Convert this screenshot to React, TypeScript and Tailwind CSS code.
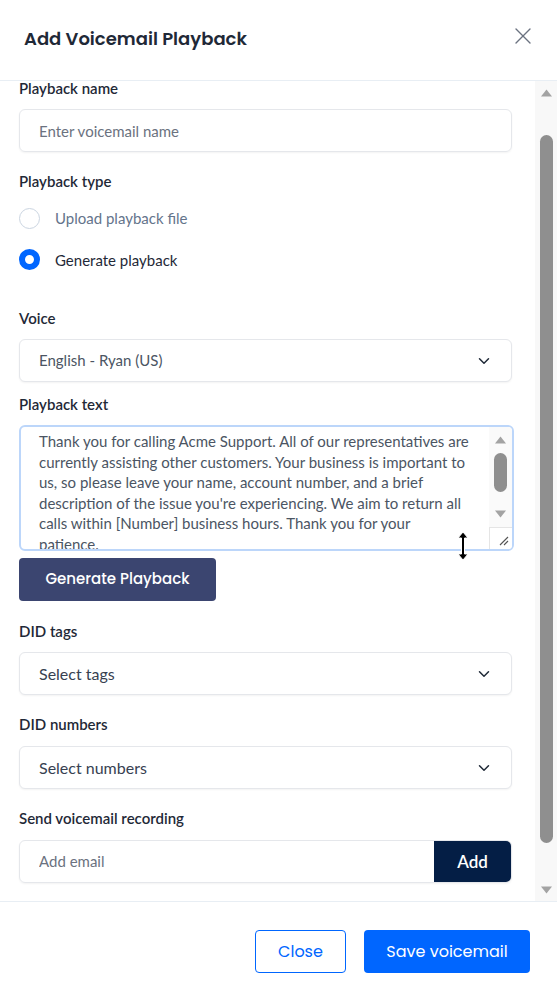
import { useEffect, useRef } from "react";
import { X, ChevronDown } from "lucide-react";

const playbackText =
  "Thank you for calling Acme Support. All of our representatives are currently assisting other customers. Your business is important to us, so please leave your name, account number, and a brief description of the issue you're experiencing. We aim to return all calls within [Number] business hours. Thank you for your patience.";

const body = { fontFamily: '"Source Sans Pro", Lato, "Noto Sans", sans-serif' };
const heading = { fontFamily: 'Poppins, Inter, "Noto Sans", sans-serif' };

function Label({ children }: { children: React.ReactNode }) {
  return (
    <div className="text-[15px] font-semibold leading-5 text-[#1f2937]" style={body}>
      {children}
    </div>
  );
}

function Arrow({ down }: { down?: boolean }) {
  return (
    <svg width="13" height="8" viewBox="0 0 13 8" className="mx-auto block">
      <path d={down ? "M1 0.5 H12 L6.5 7.5 Z" : "M1 7.5 H12 L6.5 0.5 Z"} fill="#a3a3a3" />
    </svg>
  );
}

function SelectBox({ value, large }: { value: string; large?: boolean }) {
  return (
    <div className="flex h-[43px] w-[493px] items-center justify-between rounded-md border border-[#e5e7eb] bg-white pl-[19px] pr-[18px] shadow-[0_1px_2px_rgba(0,0,0,0.05)]">
      <span
        className={large ? "text-[16px] text-[#374151]" : "text-[15px] text-[#4b5563]"}
        style={body}
      >
        {value}
      </span>
      <ChevronDown size={18} strokeWidth={2} className="text-[#1f2937]" />
    </div>
  );
}

export default function App() {
  const scrollRef = useRef<HTMLDivElement | null>(null);

  useEffect(() => {
    if (scrollRef.current) scrollRef.current.scrollTop = 35;
  }, []);

  return (
    <div className="flex h-[998px] w-[557px] flex-col overflow-hidden bg-white" style={body}>
      <header className="flex h-[81px] shrink-0 items-center justify-between border-b border-[#e8eef4] pl-6 pr-[20px]">
        <h1 className="pb-[3px] text-[18px] font-semibold text-[#1f2937]" style={heading}>
          Add Voicemail Playback
        </h1>
        <X size={28} strokeWidth={1.2} className="mb-[9px] text-[#6b7280]" />
      </header>

      <div className="flex min-h-0 flex-1">
        <div
          ref={scrollRef}
          className="min-w-0 flex-1 overflow-y-scroll [scrollbar-width:none]"
        >
          <div className="flex flex-col pb-[62px] pl-[19px] pt-[32px]">
            <Label>Playback name</Label>
            <input
              placeholder="Enter voicemail name"
              className="mt-[11px] h-[43px] w-[493px] rounded-md border border-[#e5e7eb] pl-[19px] pr-5 text-[15px] text-[#374151] shadow-[0_1px_2px_rgba(0,0,0,0.05)] outline-none placeholder:text-[#6b7280]"
              style={body}
            />

            <div className="mt-[19px]">
              <Label>Playback type</Label>
            </div>
            <div className="mt-[16px] flex items-center gap-[15px]">
              <span className="h-[21px] w-[21px] rounded-full border border-[#cbd5e1] bg-white" />
              <span className="text-[15px] text-[#64748b]">Upload playback file</span>
            </div>
            <div className="mt-[19px] flex items-center gap-[15px]">
              <span className="h-[21px] w-[21px] rounded-full border-[6px] border-[#0066ff] bg-white" />
              <span className="text-[15px] text-[#1f2937]">Generate playback</span>
            </div>

            <div className="mt-[37px]">
              <Label>Voice</Label>
            </div>
            <div className="mt-[11px]">
              <SelectBox value="English - Ryan (US)" />
            </div>

            <div className="mt-[12px]">
              <Label>Playback text</Label>
            </div>
            <div className="relative mt-[11px]">
              <div className="flex h-[126px] w-[495px] overflow-hidden rounded-md border-2 border-[#bcd6fa] bg-white">
                <textarea
                  readOnly
                  value={playbackText}
                  className="min-w-0 flex-1 resize-none overflow-y-scroll pb-0 pl-[18px] pr-[17px] pt-[4px] text-[15px] leading-[20.5px] text-[#4b5563] outline-none [scrollbar-width:none]"
                  style={body}
                />
                <div className="flex w-[23px] shrink-0 flex-col bg-[#fafafa]">
                  <div className="pt-[9px]">
                    <Arrow />
                  </div>
                  <div className="mx-auto mt-[9px] h-[39px] w-[13px] rounded-full bg-[#8f8f8f]" />
                  <div className="mt-[18px]">
                    <Arrow down />
                  </div>
                  <div className="mt-auto flex h-[22px] items-end justify-end border-l border-t border-[#e5e5e5] bg-white pb-[3px] pr-[3px]">
                    <svg width="10" height="10" viewBox="0 0 10 10">
                      <path d="M9 1 L1 9 M9 5 L5 9" stroke="#555" strokeWidth="1.1" />
                    </svg>
                  </div>
                </div>
              </div>
              <svg
                width="12"
                height="30"
                viewBox="0 0 12 30"
                className="absolute left-[438px] top-[106px]"
              >
                <path
                  d="M6 1 L11 7 H7.5 V23 H11 L6 29 L1 23 H4.5 V7 H1 Z"
                  fill="#000"
                  stroke="#fff"
                  strokeWidth="1"
                />
              </svg>
            </div>

            <button
              className="mt-[7px] h-[43px] w-[197px] rounded-[4px] bg-[#3b4570] text-[15px] font-medium text-white"
              style={heading}
            >
              Generate Playback
            </button>

            <div className="mt-[20px]">
              <Label>DID tags</Label>
            </div>
            <div className="mt-[11px]">
              <SelectBox value="Select tags" large />
            </div>

            <div className="mt-[19px]">
              <Label>DID numbers</Label>
            </div>
            <div className="mt-[12px]">
              <SelectBox value="Select numbers" large />
            </div>

            <div className="mt-[19px]">
              <Label>Send voicemail recording</Label>
            </div>
            <div className="mt-[12px] flex h-[43px] w-[493px] overflow-hidden rounded-md border border-[#e5e7eb] shadow-[0_1px_2px_rgba(0,0,0,0.05)]">
              <input
                placeholder="Add email"
                className="min-w-0 flex-1 pl-[19px] pr-5 text-[15px] outline-none placeholder:text-[#6b7280]"
                style={body}
              />
              <button className="w-[77px] bg-[#041e45] text-[17px] font-semibold text-white" style={body}>
                Add
              </button>
            </div>
          </div>
        </div>

        <div className="flex w-[22px] shrink-0 flex-col bg-[#f8f8f8]">
          <div className="pt-[8px]">
            <Arrow />
          </div>
          <div className="mx-auto mt-[38px] h-[708px] w-[13px] rounded-full bg-[#8f8f8f]" />
          <div className="mt-[43px]">
            <Arrow down />
          </div>
        </div>
      </div>

      <footer className="flex h-[97px] shrink-0 items-start justify-end gap-[18px] border-t border-[#e8eef4] pr-[27px] pt-[28px]">
        <button
          className="h-[43px] w-[91px] rounded-[4px] border border-[#0066ff] text-[16px] text-[#0066ff]"
          style={heading}
        >
          Close
        </button>
        <button
          className="h-[43px] w-[166px] rounded-[4px] bg-[#0066ff] text-[16px] text-white"
          style={heading}
        >
          Save voicemail
        </button>
      </footer>
    </div>
  );
}
